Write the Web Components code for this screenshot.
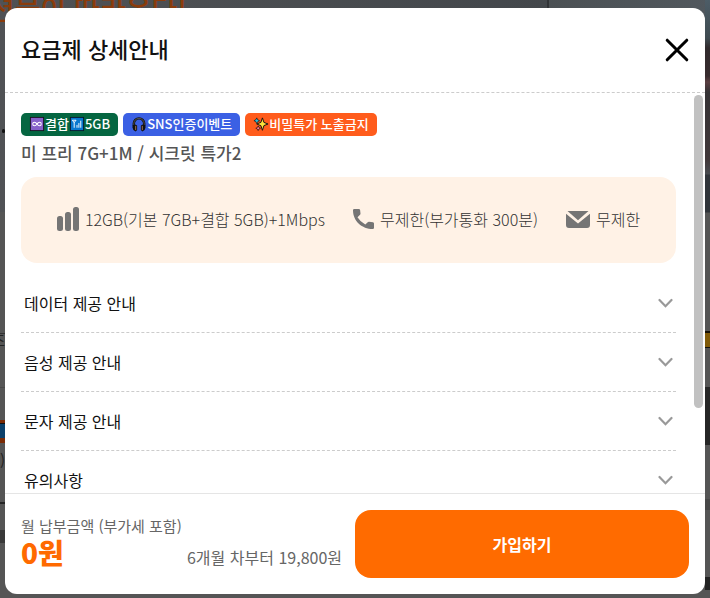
<!DOCTYPE html>
<html lang="ko">
<head>
<meta charset="utf-8">
<meta name="viewport" content="width=device-width, initial-scale=1">
<title>요금제 상세안내</title>
<style>
  html, body { height: 100%; }
  body {
    margin: 0;
    overflow: hidden;
    font-family: "Noto Sans CJK KR", "Noto Sans", sans-serif;
    color: #111;
  }
</style>
</head>
<body>
<page-backdrop>
  <plan-modal heading="요금제 상세안내">
    <plan-badge color="#056641">
      <emoji-icon name="infinity"></emoji-icon>결합<emoji-icon name="signal"></emoji-icon>5GB
    </plan-badge>
    <plan-badge color="#3b60e4"><emoji-icon name="headphone"></emoji-icon>SNS인증이벤트</plan-badge>
    <plan-badge color="#ff5c1c"><emoji-icon name="sparkles"></emoji-icon>비밀특가 노출금지</plan-badge>
    <span slot="name">미 프리 7G+1M / 시크릿 특가2</span>
    <plan-stats slot="details">
      <plan-stat icon="data">12GB(기본 7GB+결합 5GB)+1Mbps</plan-stat>
      <plan-stat icon="phone">무제한(부가통화 300분)</plan-stat>
      <plan-stat icon="mail">무제한</plan-stat>
    </plan-stats>
    <info-row slot="details">데이터 제공 안내</info-row>
    <info-row slot="details">음성 제공 안내</info-row>
    <info-row slot="details">문자 제공 안내</info-row>
    <info-row slot="details">유의사항</info-row>
    <plan-price slot="footer">
      <span slot="label">월 납부금액 (부가세 포함)</span>
      <span slot="price">0원</span>
      <span slot="note">6개월 차부터 19,800원</span>
    </plan-price>
    <join-button slot="footer">가입하기</join-button>
  </plan-modal>
</page-backdrop>

<script>
(() => {
  // the dimmed page that shows around the modal
  class PageBackdrop extends HTMLElement {
    constructor() {
      super();
      this.attachShadow({ mode: "open" });
      this.shadowRoot.innerHTML = `
        <style>
          :host {
            display: block;
            position: relative;
            box-sizing: border-box;
            height: 100%;
            padding: 8px 5px 4px;
            overflow: hidden;
            background: #555;
          }
          .hero {
            position: absolute;
            inset: 0 0 auto;
            height: 212px;
            background: linear-gradient(90deg, #505255, #43474b 77%, #303336 77%, #303336 77.3%, #4b5053 77.3%, #51585e);
          }
          .banner {
            position: absolute;
            top: -12px;
            left: -11px;
            font-size: 28px;
            line-height: 40px;
            font-weight: 500;
            white-space: nowrap;
            color: #8a3c0c;
          }
          .edge { position: absolute; top: 0; width: 5px; height: 598px; }
          .left {
            left: 0;
            background: linear-gradient(
              transparent 333px, #333 333px 334px, transparent 334px 387px,
              #484848 387px 388px, transparent 388px 420px,
              #7a2b05 420px 423px, #111 423px 424px, #0b406a 424px 438px, #7a2b05 438px 443px,
              transparent 443px 502px, #252525 502px 504px, transparent 504px 530px,
              #393939 530px 543px, transparent 543px);
          }
          .right {
            right: 0;
            background: linear-gradient(
              #4d5d67 0, #3f4b51 38px, #302a2c 48px, #382b2e 76px, #5a3f42 82px,
              #353235 92px, #41383a 160px, #484b50 174px, #30343a 175px 212px,
              #555 213px 331px, #161005 331px 333px, #805a08 333px 347px, #111 347px 348px,
              #555 348px 387px, #262626 387px 445px, #555 445px 499px,
              #484848 499px 510px, #555 510px 577px, #222 577px 590px, #555 590px);
          }
          .edge span { position: absolute; right: 0; font-size: 15px; line-height: 20px; color: #222; }
          .edge .char { top: 330px; }
          .edge .paren { top: 450px; }
          .edge .dot { top: 129px; width: 3px; height: 4px; border-radius: 2px; background: #111; }
        </style>
        <div aria-hidden="true">
          <div class="hero"></div>
          <div class="banner">션물이 따라온다!</div>
          <div class="edge left"><span class="dot"></span><span class="char">조</span><span class="paren">)</span></div>
          <div class="edge right"></div>
        </div>
        <slot></slot>
      `;
    }
  }
  window.customElements.define("page-backdrop", PageBackdrop);

  class PlanModal extends HTMLElement {
    constructor() {
      super();
      this.attachShadow({ mode: "open" });
    }
    connectedCallback() {
      this.setAttribute("role", "dialog");
      this.shadowRoot.innerHTML = `
        <style>
          :host {
            position: relative;
            display: flex;
            flex-direction: column;
            height: 100%;
            border-radius: 12px;
            overflow: hidden;
            background: #fff;
          }
          header {
            display: flex;
            align-items: center;
            justify-content: space-between;
            flex: none;
            height: 84px;
            padding: 0 16px;
            border-bottom: 1px dashed #ccc;
          }
          h2 { margin: 0; padding-bottom: 4px; font-size: 22px; line-height: 32px; font-weight: 500; }
          button { display: flex; padding: 0; border: 0; background: none; cursor: pointer; }
          .body { display: flex; flex: 1; min-height: 0; }
          .content { flex: 1; min-width: 0; overflow: hidden; padding: 20px 16px 0; }
          .badges { display: flex; gap: 5px; }
          h3 { margin: 3px 0 10px; font-size: 17px; line-height: 28px; font-weight: 500; color: #555; }
          .track { flex: none; width: 9px; padding: 2px; }
          .thumb { height: 79%; border-radius: 5px; background: #c1c1c1; }
          footer {
            display: flex;
            flex: none;
            padding: 16px;
            border-top: 1px solid #e5e5e5;
          }
        </style>
        <header>
          <h2>${this.getAttribute("heading")}</h2>
          <button type="button" aria-label="닫기">
            <svg width="24" height="24" viewBox="0 0 24 24" fill="none" stroke="#000" stroke-width="3" stroke-linecap="round">
              <path d="M2.200 2.200 21.800 21.800M21.800 2.200 2.200 21.800"/>
            </svg>
          </button>
        </header>
        <div class="body">
          <div class="content">
            <div class="badges"><slot></slot></div>
            <h3><slot name="name"></slot></h3>
            <slot name="details"></slot>
          </div>
          <div class="track"><div class="thumb"></div></div>
        </div>
        <footer><slot name="footer"></slot></footer>
      `;
    }
  }
  window.customElements.define("plan-modal", PlanModal);

  class PlanBadge extends HTMLElement {
    constructor() {
      super();
      this.attachShadow({ mode: "open" });
    }
    connectedCallback() {
      this.shadowRoot.innerHTML = `
        <style>
          :host {
            display: flex;
            align-items: center;
            box-sizing: border-box;
            height: 23px;
            padding: 0 8px 2px;
            border-radius: 5px;
            background: ${this.getAttribute("color")};
            color: #fff;
            font-size: 13px;
            font-weight: 500;
            white-space: nowrap;
          }
        </style>
        <slot></slot>
      `;
    }
  }
  window.customElements.define("plan-badge", PlanBadge);

  const emoji = {
    infinity: `
      <rect x="1" y="1" width="15" height="15" fill="#17111f"/>
      <rect x="2" y="2" width="13" height="13" fill="#8661c9"/>
      <path d="M8.500 8.500C7 6 4 6 4 8.500s3 2.500 4.500 0 4.500-2.500 4.500 0-3 2.500-4.500 0Z" fill="none" stroke="#fff" stroke-width="1.100"/>`,
    signal: `
      <rect x="1" y="1" width="15" height="15" fill="#08182a"/>
      <rect x="2" y="2" width="13" height="13" fill="#0878cf"/>
      <path d="M3.500 4.500h4L5.500 7ZM5.500 6.500v6M8.500 9.500v3M10.500 7.500v5M12.500 5V12.500" fill="none" stroke="#fff" stroke-width="1"/>`,
    headphone: `
      <path d="M3 11V8a5.500 5.500 0 0 1 11 0V11" fill="none" stroke="#111" stroke-width="2.600"/>
      <path d="M3 11V8a5.500 5.500 0 0 1 11 0V11" fill="none" stroke="#666" stroke-width=".8"/>
      <path d="M2 9.500 4.500 9l2 1v5L5 16.500 2.500 15 1.500 12ZM15 9.500 12.500 9l-2 1v5l1.500 1.500 2.500-1.500 1-3Z" fill="#111"/>
      <path d="M5 10.500v4.500M12 10.500v4.500" stroke="#a87960" stroke-width="1"/>`,
    sparkles: `
      <path d="M10 2 11.600 6.800 16 8.500l-4.400 1.700-1.600 5-1.600-5L4 8.500l4.400-1.700Z" fill="#ffe33b" stroke="#111" stroke-width="1"/>
      <path d="M4 2 5 4l2 1-2 1-1 2-1-2-2-1 2-1Z" fill="#25bfe0" stroke="#111" stroke-width=".7"/>
      <path d="m5.500 10.500 .8 1.700 1.700.8-1.700.8-.8 1.700-.8-1.700-1.700-.8 1.700-.8Z" fill="#ff7898" stroke="#111" stroke-width=".7"/>`,
  };

  class EmojiIcon extends HTMLElement {
    constructor() {
      super();
      this.attachShadow({ mode: "open" });
    }
    connectedCallback() {
      this.shadowRoot.innerHTML = `
        <style>
          :host { display: flex; flex: none; }
        </style>
        <svg width="16" height="16" viewBox="0 0 17 17" aria-hidden="true">${emoji[this.getAttribute("name")]}</svg>
      `;
    }
  }
  window.customElements.define("emoji-icon", EmojiIcon);

  class PlanStats extends HTMLElement {
    constructor() {
      super();
      this.attachShadow({ mode: "open" });
      this.shadowRoot.innerHTML = `
        <style>
          :host {
            display: flex;
            align-items: center;
            justify-content: center;
            gap: 28px;
            box-sizing: border-box;
            height: 86px;
            padding-bottom: 2px;
            margin-bottom: 11px;
            border-radius: 16px;
            background: #fff2e6;
          }
        </style>
        <slot></slot>
      `;
    }
  }
  window.customElements.define("plan-stats", PlanStats);

  const icons = {
    data: `<svg width="22" height="24" viewBox="0 0 22 24"><rect y="9" width="6" height="15" rx="2.500"/><rect x="8" y="5" width="6" height="19" rx="2.500"/><rect x="16" width="6" height="24" rx="2.500"/></svg>`,
    phone: `<svg width="21" height="20" viewBox="0 0 21 20"><path d="M1.200 0H5.800Q6.900 0 7.100 1L7.500 4.400Q7.600 5.200 7 5.800L4.500 8.300Q7.300 13 12.300 15.500L14.700 13.200Q15.300 12.600 16 12.700L20 13.300Q21 13.500 21 14.500V18.800Q21 20 19.800 20C9 20 0 12 0 1.200Q0 0 1.200 0Z"/></svg>`,
    mail: `<svg width="24" height="17" viewBox="0 0 24 17"><path d="M1.500 0h21L12 9.300Z"/><path d="M0 2.700 12 12.500 24 2.700V14q0 3-3 3H3q-3 0-3-3Z"/></svg>`,
  };

  class PlanStat extends HTMLElement {
    constructor() {
      super();
      this.attachShadow({ mode: "open" });
    }
    connectedCallback() {
      this.shadowRoot.innerHTML = `
        <style>
          :host {
            display: flex;
            align-items: center;
            gap: 6px;
            font-size: 16px;
            line-height: 24px;
            font-weight: 300;
            white-space: nowrap;
            color: #333;
          }
          svg { flex: none; fill: #757575; }
        </style>
        ${icons[this.getAttribute("icon")]}
        <span><slot></slot></span>
      `;
    }
  }
  window.customElements.define("plan-stat", PlanStat);

  class InfoRow extends HTMLElement {
    constructor() {
      super();
      this.attachShadow({ mode: "open" });
      this.shadowRoot.innerHTML = `
        <style>
          :host { display: block; border-bottom: 1px dashed #ccc; }
          button {
            display: flex;
            align-items: center;
            justify-content: space-between;
            width: 100%;
            height: 58px;
            padding: 0 3px;
            border: 0;
            background: none;
            font: inherit;
            font-size: 16px;
            color: #111;
            cursor: pointer;
          }
        </style>
        <button type="button" aria-expanded="false">
          <slot></slot>
          <svg width="15" height="10" viewBox="0 0 15 10" fill="none" stroke="#999" stroke-width="2.200" stroke-linecap="round">
            <path d="m1.500 2 6 6.200 6-6.200"/>
          </svg>
        </button>
      `;
    }
  }
  window.customElements.define("info-row", InfoRow);

  class PlanPrice extends HTMLElement {
    constructor() {
      super();
      this.attachShadow({ mode: "open" });
      this.shadowRoot.innerHTML = `
        <style>
          :host {
            display: block;
            flex: 0 0 50%;
            padding: 5px 13px 0 0;
            box-sizing: border-box;
            white-space: nowrap;
            color: #666;
          }
          .label { font-size: 15px; line-height: 22px; }
          .row { display: flex; align-items: baseline; justify-content: space-between; line-height: 30px; }
          .price { font-size: 28px; font-weight: 900; color: #ff6a00; }
          .note { font-size: 16px; }
        </style>
        <div class="label"><slot name="label"></slot></div>
        <div class="row">
          <strong class="price"><slot name="price"></slot></strong>
          <span class="note"><slot name="note"></slot></span>
        </div>
      `;
    }
  }
  window.customElements.define("plan-price", PlanPrice);

  class JoinButton extends HTMLElement {
    constructor() {
      super();
      this.attachShadow({ mode: "open" });
      this.shadowRoot.innerHTML = `
        <style>
          :host { display: block; flex: 0 0 50%; }
          button {
            width: 100%;
            height: 68px;
            border: 0;
            border-radius: 16px;
            background: #ff6b00;
            color: #fff;
            font: inherit;
            font-size: 16px;
            font-weight: 700;
            cursor: pointer;
          }
        </style>
        <button type="button"><slot></slot></button>
      `;
    }
  }
  window.customElements.define("join-button", JoinButton);
})();
</script>
</body>
</html>
